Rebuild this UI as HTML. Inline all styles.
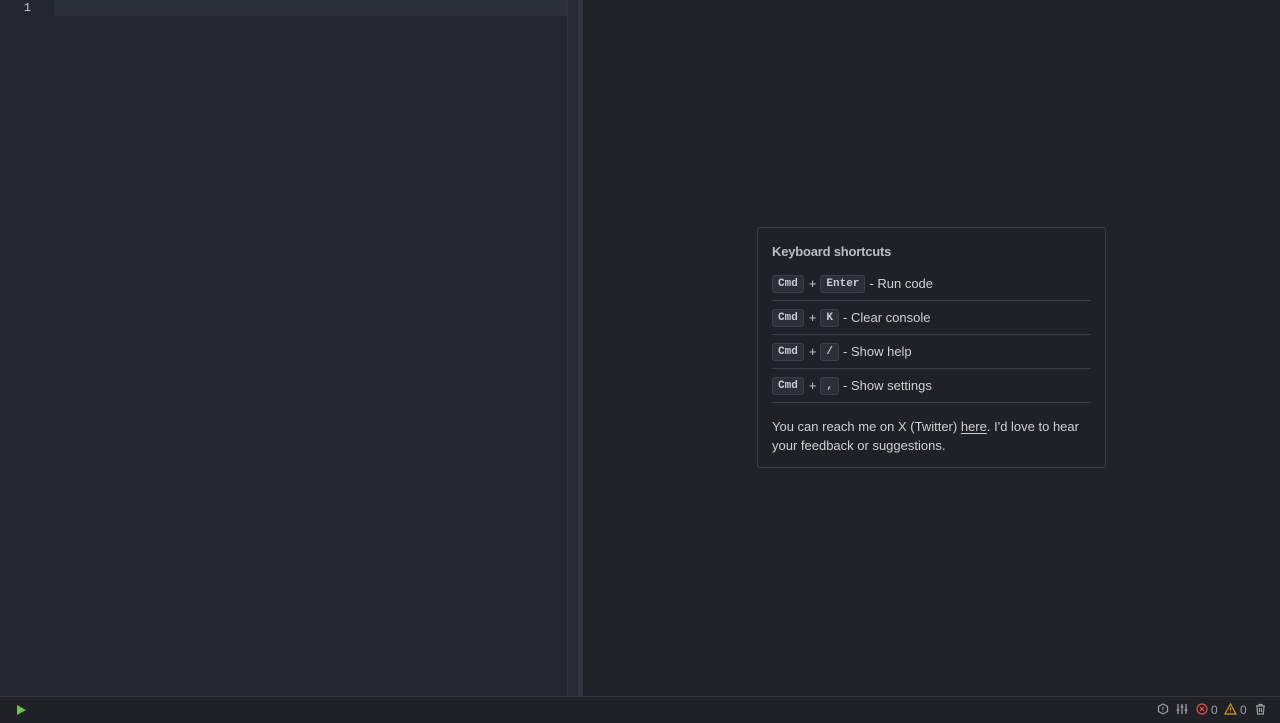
<!DOCTYPE html>
<html><head><meta charset="utf-8"><style>
*{box-sizing:border-box;margin:0;padding:0}
body{width:1280px;height:723px;overflow:hidden;background:#202227;font-family:"Liberation Sans",sans-serif;position:relative}
#ed{position:absolute;left:0;top:0;width:567px;height:696px;background:#23262f}
#ln{position:absolute;left:0;top:0;width:54px;height:16px;color:#c5c8d0;font:12px "Liberation Mono",monospace;text-align:right;padding-right:23px;line-height:16px}
#cur{position:absolute;left:54px;top:0;width:513px;height:16px;background:#2c303b}
#gut{position:absolute;left:567px;top:0;width:11px;height:696px;background:#272a33;border-left:1px solid #2f333d}
#split{position:absolute;left:578px;top:0;width:5px;height:696px;background:#33363f}
#bar{position:absolute;left:0;top:696px;width:1280px;height:27px;background:#1f2126;border-top:1px solid #33363e}
#card{position:absolute;left:757px;top:227px;width:349px;height:241px;border:1px solid #3a3d45;border-radius:3px;background:#1f2126;padding:0 14px;color:#cdd0d6;font-size:13px}
h3{font-size:13px;font-weight:bold;color:#b8bcc4;margin-top:16px;margin-bottom:8px;letter-spacing:-0.2px}
.row{height:34px;border-bottom:1px solid #3a3d45;display:flex;align-items:center}
kbd{display:inline-block;font:bold 11px "Liberation Mono",monospace;background:#2c2f37;border:1px solid #3b3f48;border-radius:3px;color:#c9ccd2;padding:2px 5px;height:18px;line-height:13px;margin-right:4px}
.p{margin-right:4px;margin-left:1px;color:#c9ccd2}
.ft{margin-top:14px;line-height:19px}
.ft u{text-underline-offset:2px}
.ic{position:absolute;top:703px}
</style></head><body>
<div id="ed"><div id="cur"></div><div id="ln">1</div></div>
<div id="gut"></div><div id="split"></div>
<div id="card">
<h3>Keyboard shortcuts</h3>
<div class="row"><kbd>Cmd</kbd><span class="p">+</span><kbd>Enter</kbd>- Run code</div>
<div class="row"><kbd>Cmd</kbd><span class="p">+</span><kbd>K</kbd>- Clear console</div>
<div class="row"><kbd>Cmd</kbd><span class="p">+</span><kbd>/</kbd>- Show help</div>
<div class="row"><kbd>Cmd</kbd><span class="p">+</span><kbd>,</kbd>- Show settings</div>
<div class="ft">You can reach me on X (Twitter) <u>here</u>. I'd love to hear your feedback or suggestions.</div>
</div>
<div id="bar"></div>
<svg class="ic" style="left:15px;top:704px" width="12" height="12"><path d="M2 1L11 6L2 11Z" fill="#6cc24a"/></svg>
<svg class="ic" style="left:1157px" width="12" height="12" fill="none" stroke="#9a9ea6" stroke-width="1.2"><path d="M6 1L10.5 3.5V8.5L6 11L1.5 8.5V3.5Z"/><path d="M6 4V6.5M6 8V8.6"/></svg>
<svg class="ic" style="left:1176px" width="12" height="12" stroke="#9a9ea6" stroke-width="1.3"><path d="M2 1V11M6 1V11M10 1V11M0.5 7H3.5M4.5 4H7.5M8.5 7H11.5"/></svg>
<svg class="ic" style="left:1196px" width="12" height="12" fill="none" stroke="#e5534b" stroke-width="1.2"><circle cx="6" cy="6" r="5"/><path d="M4 4L8 8M8 4L4 8"/></svg>
<span style="position:absolute;left:1211px;top:703px;color:#9a9ea6;font-size:12px">0</span>
<svg class="ic" style="left:1224px" width="13" height="12" fill="none" stroke="#d29922" stroke-width="1.2"><path d="M6.5 1L12 11H1Z"/><path d="M6.5 4.5V7.5M6.5 8.8V9.4"/></svg>
<span style="position:absolute;left:1240px;top:703px;color:#9a9ea6;font-size:12px">0</span>
<svg class="ic" style="left:1255px" width="11" height="12" fill="none" stroke="#9a9ea6" stroke-width="1.2"><path d="M1 3H10M4 3V1.5H7V3M2 3L2.6 11H8.4L9 3M4.5 5V9M6.5 5V9"/></svg>
</body></html>
